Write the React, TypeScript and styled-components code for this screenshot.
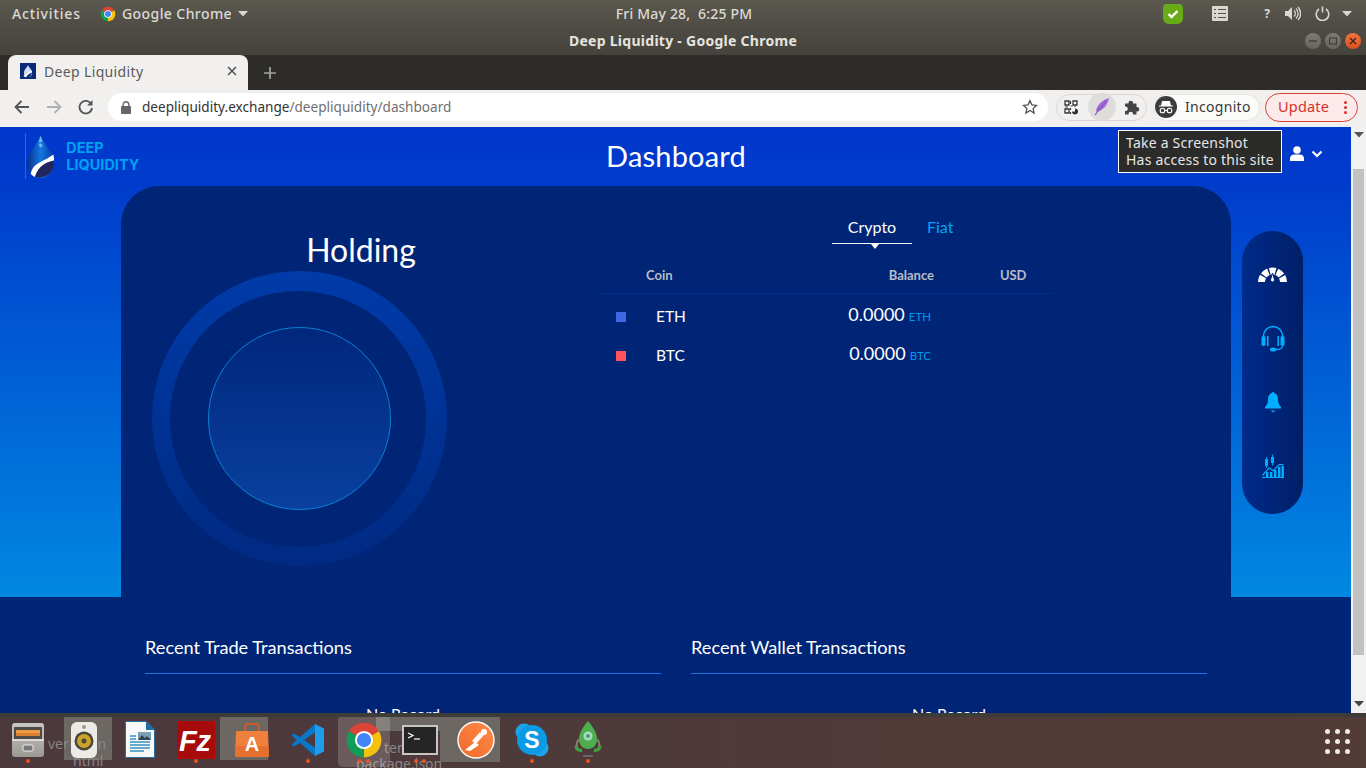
import React from "react";
import styled, { createGlobalStyle } from "styled-components";

const UI = `"Noto Sans", "Open Sans", sans-serif`;
const PAGE = `Lato, "Open Sans", sans-serif`;

const Global = createGlobalStyle`
  html, body { margin: 0; padding: 0; overflow: hidden; background: #2d2c2a; }
  * { box-sizing: border-box; }
`;

const Desktop = styled.div`
  position: relative; width: 1366px; height: 768px; overflow: hidden;
  display: flex; flex-direction: column; font-family: ${UI};
`;
const TopBar = styled.div`
  height: 27px; flex: none; background: linear-gradient(#5b5850, #4f4c45);
  display: grid; grid-template-columns: 1fr auto 1fr; align-items: center;
  color: #dcdbd3; font-size: 14px; font-weight: 500; padding: 0 12px;
`;
const TopLeft = styled.div`display: flex; align-items: center;`;
const Activities = styled.span`width: 88px; letter-spacing: 0.85px;`;
const AppName = styled.span`margin-left: 6px; letter-spacing: 0.42px;`;
const Clock = styled.div`letter-spacing: 0.2px; white-space: pre; margin-left: 2px;`;
const TopRight = styled.div`display: flex; align-items: center; justify-content: flex-end;`;
const TitleBar = styled.div`
  height: 28px; flex: none; background: linear-gradient(#4f4c45, #45433d);
  display: flex; align-items: center; justify-content: center; position: relative; padding-bottom: 2px;
  color: #e6e4de; font-size: 14px; font-weight: 700; letter-spacing: 0.27px;
`;
const WinButtons = styled.div`position: absolute; right: 5px; top: 6px; display: flex; gap: 4px;`;
const WinButton = styled.div<{ $close?: boolean }>`
  width: 16px; height: 16px; border-radius: 50%;
  background: ${p => p.$close ? "linear-gradient(#ef7540,#d9501e)" : "linear-gradient(#7d7a72,#67645d)"};
  display: flex; align-items: center; justify-content: center;
`;
const TabStrip = styled.div`
  height: 35px; flex: none; background: #2d2c2a; padding-left: 8px; display: flex; align-items: center;
`;
const Tab = styled.div`
  width: 240px; height: 35px; background: #f1f0ee; border-radius: 8px 8px 0 0;
  display: flex; align-items: center; padding: 0 11px 3px 12px; color: #5a5a5a; font-size: 14px; letter-spacing: 0.35px;
`;
const TabTitle = styled.span`margin-left: 8px; flex: 1;`;
const NewTab = styled.div`margin-left: 15px; display: flex;`;
const Toolbar = styled.div`
  height: 37px; flex: none; background: #f1f0ee; display: flex; align-items: center; padding: 0 8px 3px 14px;
`;
const NavIcons = styled.div`display: flex; gap: 16px; align-items: center; width: 94px;`;
const Omnibox = styled.div`
  width: 940px; height: 28px; background: #fff; border-radius: 14px; display: flex; align-items: center;
  padding: 0 10px 0 12px; font-size: 13.6px; color: #6f6f6f;
`;
const UrlHost = styled.span`color: #333; margin-left: 10px; margin-top: -2px;`;
const UrlPath = styled.span`flex: 1; margin-top: -2px;`;
const ExtPill = styled.div`
  margin-left: 8px; width: 91px; height: 27px; border: 1px solid #d9d8d6; border-radius: 14px;
  display: flex; align-items: center; justify-content: space-between; padding: 0;
`;
const ExtSlot = styled.div<{ $on?: boolean }>`
  width: 28px; height: 28px; border-radius: 50%; flex: none;
  background: ${p => p.$on ? "#dedddb" : "transparent"};
  display: flex; align-items: center; justify-content: center;
`;
const IncognitoPill = styled.div`
  margin-left: 6px; width: 107px; height: 27px; border-radius: 14px; background: #fbfbfa; border: 1px solid #e6e5e3;
  display: flex; align-items: center; padding-left: 1px; color: #3a3a3a; font-size: 14px; letter-spacing: 0.3px;
`;
const IncognitoLabel = styled.span`margin: -2px 0 0 8px;`;
const UpdatePill = styled.div`
  margin-left: 5px; width: 93px; height: 29px; border-radius: 15px; background: #fcebea; border: 1px solid #d9403a;
  display: flex; align-items: center; justify-content: space-between; padding: 0 10px 0 12px;
  color: #d9302a; font-size: 14.5px; letter-spacing: 0.2px;
`;
const UpdateLabel = styled.span`margin-top: -2px;`;
const Dots = styled.div`display: flex; flex-direction: column; gap: 2px;`;
const Dot = styled.i`display: block; width: 3px; height: 3px; border-radius: 50%; background: #d9302a;`;

const Viewport = styled.div`flex: 1; min-height: 0; display: flex; overflow: hidden;`;
const Page = styled.div`width: 1351px; flex: none; overflow: hidden; font-family: ${PAGE}; background: #002576;`;
const Scrollbar = styled.div`
  flex: 1; background: #f1f1f1; display: flex; flex-direction: column; align-items: center; padding-top: 5px;
`;
const ScrollThumb = styled.div`width: 11px; height: 486px; background: #c1c1c1; margin: 31px 0 46px;`;
const Hero = styled.div`
  height: 470px; background: linear-gradient(#0037cc 0%, #003ccb 12%, #0088e2 100%);
  display: flex; flex-direction: column;
`;
const Header = styled.header`
  height: 59px; flex: none; display: grid; grid-template-columns: 1fr auto 1fr; align-items: center; padding: 0 24px 0 25px;
`;
const Logo = styled.div`
  display: flex; align-items: center; height: 46px; border-left: 1px solid #0a78e0; margin-top: -1px;
`;
const LogoText = styled.div`
  margin-left: 11px; color: #00a2f2; font-family: Inter, ${PAGE}; font-weight: 700; font-size: 14.4px; line-height: 17px;
  letter-spacing: 0.05px; margin-top: -1px;
`;
const PageTitle = styled.h1`margin: -2px 0 0; color: #fff; font-size: 29px; font-weight: 400; line-height: 36px; letter-spacing: 0.2px;`;
const UserMenu = styled.div`display: flex; justify-content: flex-end; align-items: center; gap: 7px; margin: -6px 4px 0 0;`;
const HeroBody = styled.div`flex: 1; min-height: 0; display: flex; padding-left: 121px;`;
const Panel = styled.section`
  width: 1110px; background: #002576; border-radius: 38px 38px 0 0; display: flex;
`;
const HoldingCol = styled.div`width: 480px; flex: none;`;
const HoldingTitle = styled.h2`
  margin: 44px 0 0; text-align: center; color: #fff; font-size: 32px; font-weight: 400; line-height: 40px;
`;
const OuterRing = styled.div`
  width: 295px; height: 295px; margin: 1px 0 0 31px; border-radius: 50%;
  background: linear-gradient(#003ba9, #002a82); display: flex; align-items: center; justify-content: center;
`;
const RingHole = styled.div`
  width: 256px; height: 256px; margin-right: 4px; border-radius: 50%; background: #002576;
  display: flex; align-items: center; justify-content: center;
`;
const InnerDisc = styled.div`
  width: 183px; height: 183px; margin-left: 4px; flex: none; border-radius: 50%; border: 1px solid #0a80d4;
  background: linear-gradient(#00277c, #0a409f);
`;
const TableCol = styled.div`width: 451px; flex: none;`;
const Tabs = styled.div`display: flex; margin: 27px 0 0 231px;`;
const TabLink = styled.div<{ $active?: boolean }>`
  position: relative; height: 31px; line-height: 27px; font-size: 16px; padding: 0 15px;
  color: ${p => p.$active ? "#fff" : "#00a6f5"};
  width: ${p => p.$active ? "80px" : "auto"}; text-align: center;
  border-bottom: ${p => p.$active ? "1px solid #fff" : "0"};
  ${p => p.$active ? `&::after { content: ""; position: absolute; left: 39px; top: 31px; border: 4px solid transparent; border-top: 5px solid #fff; border-bottom: 0; }` : ""}
`;
const TableHead = styled.div`
  margin-top: 17px; height: 33px; display: grid; grid-template-columns: 255px 78px 66px 1fr; align-items: center;
  border-bottom: 1px solid #00318f; color: #b7bcc8; font-size: 13px; font-weight: 700; padding-bottom: 5px;
`;
const CoinHead = styled.span`padding-left: 45px;`;
const BalanceHead = styled.span`text-align: right;`;
const UsdHead = styled.span`grid-column: 4; letter-spacing: -0.2px;`;
const CoinRow = styled.div<{ $first?: boolean }>`
  height: 39px; margin-top: ${p => p.$first ? "2px" : "0"}; display: flex; align-items: center; padding-left: 15px; width: 330px; color: #fff;
`;
const Swatch = styled.i<{ $c: string }>`display: block; width: 10px; height: 10px; margin-top: 2px; background: ${p => p.$c};`;
const CoinName = styled.span`margin-left: 30px; font-size: 15.5px; flex: 1;`;
const Amount = styled.span`font-size: 18px; margin-top: -3px;`;
const Unit = styled.span`font-size: 11.5px; color: #0098ea; margin: 2px 0 0 4px;`;
const SideNav = styled.nav`
  width: 61px; height: 283px; margin: 45px 0 0 11px; border-radius: 31px;
  background: linear-gradient(90deg, #002b8a, #001f66);
  display: flex; flex-direction: column; align-items: center; padding-top: 12px;
`;
const NavItem = styled.div`height: 63.7px; display: flex; justify-content: center; align-items: center;`;
const Lower = styled.div`display: flex; gap: 30px; padding: 37px 0 0 145px;`;
const LowerCol = styled.section`width: 516px;`;
const LowerTitle = styled.h3`
  margin: 0; height: 40px; line-height: 26px; border-bottom: 1px solid #1a70dc; color: #fff; font-size: 18.2px; font-weight: 400;
`;
const NoRecord = styled.div`margin-top: 30px; text-align: center; color: #fff; font-size: 16px; line-height: 20px;`;

const Tooltip = styled.div`
  position: absolute; left: 1118px; top: 130px; width: 164px; height: 43px; background: #2b2b2a; border: 1px solid #fff;
  color: #e6e6e6; font-size: 14px; line-height: 17px; padding: 3px 0 0 7px; letter-spacing: 0.22px; white-space: nowrap;
`;

const Dock = styled.div`
  position: relative; height: 55px; flex: none; background: linear-gradient(90deg, #4b393d, #533b36);
  border-top: 4px solid #3e3c38; overflow: hidden;
`;
const GhostTile = styled.div<{ $x: number; $w: number; $h: number; $t?: number }>`
  position: absolute; left: ${p => p.$x}px; top: ${p => p.$t ?? 0}px; width: ${p => p.$w}px; height: ${p => p.$h}px; background: #6c6763;
`;
const GhostText = styled.span<{ $x: number; $y: number }>`
  position: absolute; left: ${p => p.$x}px; top: ${p => p.$y}px; color: #8b8584; font-size: 14px; line-height: 16px; white-space: nowrap;
`;
const ActiveTile = styled.div`
  position: absolute; left: 338px; top: -2px; width: 52px; height: 52px; border-radius: 5px; background: rgba(255,255,255,0.17);
`;
const DockIcons = styled.div`position: relative; display: flex; height: 100%;`;
const DockItem = styled.div`
  position: relative; width: 56px; height: 47px; display: flex; align-items: center; justify-content: center; padding-bottom: 2px;
`;
const RunDots = styled.div`position: absolute; bottom: 1px; left: 0; right: 0; display: flex; justify-content: center; gap: 4px;`;
const RunDot = styled.i`display: block; width: 4px; height: 4px; border-radius: 50%; background: #e9541f;`;
const AppGrid = styled.div`
  position: absolute; right: 16px; top: 12px; display: grid; grid-template-columns: repeat(3, 5px); gap: 5px;
`;
const GridDot = styled.i`display: block; width: 5px; height: 5px; border-radius: 50%; background: #efecea;`;

const ChromeLogo = ({ s }: { s: number }) => (
  <svg width={s} height={s} viewBox="0 0 48 48">
    <path d="M24 24 L5 13 A22 22 0 0 1 43 13 Z" fill="#db4437" />
    <path d="M24 24 L43 13 A22 22 0 0 1 24 46 Z" fill="#f4c20d" />
    <path d="M24 24 L24 46 A22 22 0 0 1 5 13 Z" fill="#0f9d58" />
    <circle cx="24" cy="24" r="11.500" fill="#fff" />
    <circle cx="24" cy="24" r="9" fill="#4285f4" />
  </svg>
);
const Caret = ({ c = "#d8d7cf" }: { c?: string }) => (
  <svg width="10" height="6" viewBox="0 0 10 6"><path d="M0 0h10L5 5.500z" fill={c} /></svg>
);

const Drop = ({ s }: { s: number }) => (
  <svg width={s * 0.68} height={s} viewBox="0 0 30 44">
    <defs>
      <linearGradient id="dg" x1="0" x2="1" y1="0" y2="0">
        <stop offset="0" stopColor="#0a2f8c" /><stop offset="0.5" stopColor="#1278e0" /><stop offset="1" stopColor="#0a3aa0" />
      </linearGradient>
    </defs>
    <path d="M15 0 C18 10 29 18 29 30 A14 14 0 0 1 1 30 C1 18 12 10 15 0Z" fill="url(#dg)" />
    <path d="M15 1l2 6h-4zM14 8l3 2-1 3-3-2z" fill="#6fb8f5" />
    <path d="M27.500 22 C29 30 29 38 20 42 A14 14 0 0 1 5 40 C8 30 14 30 27.500 22Z" fill="#22265c" />
    <path d="M28 20 C29 24 29 25 28.600 26 C20 28 13 31 9 43 A14 14 0 0 1 5 40 C7 28 18 28 28 20Z" fill="#fff" />
  </svg>
);

export default function App() {
  return (
    <Desktop>
      <Global />
      <TopBar>
        <TopLeft>
          <Activities>Activities</Activities>
          <ChromeLogo s={16} />
          <AppName>Google Chrome</AppName>
          <span style={{ width: 6 }} />
          <Caret />
        </TopLeft>
        <Clock>Fri May 28,  6:25 PM</Clock>
        <TopRight>
          <svg width="22" height="22" viewBox="0 0 22 22" style={{ marginRight: 28 }}>
            <path d="M4 1h13c3 0 4 2 4 5v9c0 4-3 6-7 6H8c-4 0-7-2-7-6V5c0-2 1-4 3-4z" fill="#69ab16" />
            <path d="M6.500 11l3 3 6-6" fill="none" stroke="#fff" strokeWidth="2.400" />
          </svg>
          <svg width="16" height="15" viewBox="0 0 16 15" style={{ marginRight: 36 }}>
            <rect width="16" height="15" rx="1" fill="#d9d8d0" />
            <path d="M2 3.500h2M6 3.500h8M2 7.500h2M6 7.500h8M2 11.500h2M6 11.500h8" stroke="#55524b" strokeWidth="1" />
          </svg>
          <span style={{ fontSize: 12, fontWeight: 700, marginRight: 15 }}>?</span>
          <svg width="16" height="15" viewBox="0 0 16 15" style={{ marginRight: 14 }}>
            <path d="M0 5h3l4-4v13l-4-4H0z" fill="#d9d8d0" />
            <path d="M9 4.500a4 4 0 0 1 0 6M11 2.500a7 7 0 0 1 0 10M13 1a9.500 9.500 0 0 1 0 13" fill="none" stroke="#d9d8d0" strokeWidth="1.300" />
          </svg>
          <svg width="15" height="15" viewBox="0 0 15 15" style={{ marginRight: 12 }}>
            <path d="M4 3a6.300 6.300 0 1 0 7 0" fill="none" stroke="#d9d8d0" strokeWidth="1.600" />
            <path d="M7.500 0.500v6" stroke="#d9d8d0" strokeWidth="1.600" />
          </svg>
          <Caret />
          <span style={{ width: 2 }} />
        </TopRight>
      </TopBar>
      <TitleBar>
        Deep Liquidity - Google Chrome
        <WinButtons>
          <WinButton><svg width="10" height="10"><path d="M1 5h8" stroke="#3c3a36" strokeWidth="1.300" /></svg></WinButton>
          <WinButton><svg width="10" height="10"><rect x="1.500" y="2" width="7" height="6" fill="none" stroke="#3c3a36" /></svg></WinButton>
          <WinButton $close><svg width="10" height="10"><path d="M2 2l6 6M8 2l-6 6" stroke="#4a2010" strokeWidth="1.300" /></svg></WinButton>
        </WinButtons>
      </TitleBar>
      <TabStrip>
        <Tab>
          <svg width="16" height="16" viewBox="0 0 16 16">
            <rect width="16" height="16" fill="#0b2a78" />
            <path d="M8 2c1 3 4 4 4 8a4 4 0 0 1-8 0c0-4 3-5 4-8z" fill="#cfe0f6" />
            <path d="M4 12c2-3 5-2 8-4 0 4-2 6-4 6-2 0-3-1-4-2z" fill="#0b2a78" />
            <path d="M3.500 13c2-4 5-3 8.500-5.500v2C9 11 7 11.500 6 14.500z" fill="#fff" />
          </svg>
          <TabTitle>Deep Liquidity</TabTitle>
          <svg width="10" height="10" viewBox="0 0 10 10"><path d="M1 1l8 8M9 1l-8 8" stroke="#555" strokeWidth="1.600" /></svg>
        </Tab>
        <NewTab>
          <svg width="14" height="14" viewBox="0 0 14 14"><path d="M7 1v12M1 7h12" stroke="#a3a3a1" strokeWidth="1.700" /></svg>
        </NewTab>
      </TabStrip>
      <Toolbar>
        <NavIcons>
          <svg width="16" height="14" viewBox="0 0 16 14"><path d="M15 7H2M7.500 1L1.500 7l6 6" fill="none" stroke="#555" strokeWidth="1.800" /></svg>
          <svg width="16" height="14" viewBox="0 0 16 14"><path d="M1 7h13M8.500 1l6 6-6 6" fill="none" stroke="#b0b0b0" strokeWidth="1.800" /></svg>
          <svg width="16" height="16" viewBox="0 0 16 16"><path d="M13.500 5.500A6.300 6.300 0 1 0 14 9" fill="none" stroke="#555" strokeWidth="1.800" /><path d="M14.500 1v5.500H9z" fill="#555" /></svg>
        </NavIcons>
        <Omnibox>
          <svg width="12" height="13" viewBox="0 0 12 13">
            <rect x="1" y="5" width="10" height="8" rx="1" fill="#666" />
            <path d="M3.200 5V3.500a2.800 2.800 0 0 1 5.600 0V5" fill="none" stroke="#666" strokeWidth="1.400" />
          </svg>
          <UrlHost>deepliquidity.exchange</UrlHost>
          <UrlPath>/deepliquidity/dashboard</UrlPath>
          <svg width="16" height="16" viewBox="0 0 24 24"><path d="M12 2.500l2.900 6.300 6.900.8-5.100 4.700 1.400 6.800L12 17.200l-6.100 3.900 1.400-6.800L2.200 9.600l6.900-.8z" fill="none" stroke="#555" strokeWidth="2" /></svg>
        </Omnibox>
        <ExtPill>
          <ExtSlot>
            <svg width="14" height="15" viewBox="0 0 14 15">
              <rect width="14" height="15" fill="#fafafa" />
              <path d="M1 1h4v4H1zM9 1h4v4H9zM1 9h4v4H1z" fill="none" stroke="#333" strokeWidth="1.300" />
              <path d="M6.500 1v3M6.500 6h2M1 7h3M6.500 8v2M6.500 12v2M11 6v1" stroke="#333" strokeWidth="1.200" />
              <path d="M11 8.500A3 3 0 1 1 8 11.500h3z" fill="#333" />
            </svg>
          </ExtSlot>
          <ExtSlot $on>
            <svg width="16" height="18" viewBox="0 0 16 18">
              <path d="M15 0C8 2 3 7 2 13l1 1c6-2 11-7 12-14z" fill="#a06cd5" />
              <path d="M12 3L1 17" stroke="#8a4fc7" strokeWidth="1.200" />
            </svg>
          </ExtSlot>
          <ExtSlot>
            <svg width="16" height="16" viewBox="0 0 16 16">
              <path d="M1 4.500h3.500a2.300 2.300 0 1 1 4.500 0H12.500V8a2.300 2.300 0 1 1 0 4.500V15.500H9a2.300 2.300 0 1 0-4.500 0H1V12a2.300 2.300 0 1 0 0-4.500z" fill="#444" />
            </svg>
          </ExtSlot>
        </ExtPill>
        <IncognitoPill>
          <svg width="22" height="22" viewBox="0 0 22 22">
            <circle cx="11" cy="11" r="11" fill="#3c3c3c" />
            <path d="M4 10h14M6.500 10l1-4.500h7l1 4.500" fill="#fff" stroke="#fff" strokeWidth="1.100" />
            <circle cx="7.500" cy="14.500" r="2.300" fill="none" stroke="#fff" strokeWidth="1.100" />
            <circle cx="14.500" cy="14.500" r="2.300" fill="none" stroke="#fff" strokeWidth="1.100" />
            <path d="M9.800 14.500h2.400" stroke="#fff" strokeWidth="1" />
          </svg>
          <IncognitoLabel>Incognito</IncognitoLabel>
        </IncognitoPill>
        <UpdatePill>
          <UpdateLabel>Update</UpdateLabel>
          <Dots><Dot /><Dot /><Dot /></Dots>
        </UpdatePill>
      </Toolbar>
      <Viewport>
        <Page>
          <Hero>
            <Header>
              <Logo>
                <Drop s={43} />
                <LogoText>DEEP<br />LIQUIDITY</LogoText>
              </Logo>
              <PageTitle>Dashboard</PageTitle>
              <UserMenu>
                <svg width="14" height="15" viewBox="0 0 14 15">
                  <circle cx="7" cy="4" r="3.800" fill="#fff" />
                  <path d="M0 15v-2.500C0 10 2 8.500 4 8.500h6c2 0 4 1.500 4 4V15z" fill="#fff" />
                </svg>
                <svg width="12" height="8" viewBox="0 0 12 8"><path d="M1.500 1.500L6 6l4.500-4.500" fill="none" stroke="#fff" strokeWidth="2.200" /></svg>
              </UserMenu>
            </Header>
            <HeroBody>
              <Panel>
                <HoldingCol>
                  <HoldingTitle>Holding</HoldingTitle>
                  <OuterRing>
                    <RingHole>
                      <InnerDisc />
                    </RingHole>
                  </OuterRing>
                </HoldingCol>
                <TableCol>
                  <Tabs>
                    <TabLink $active>Crypto</TabLink>
                    <TabLink>Fiat</TabLink>
                  </Tabs>
                  <TableHead>
                    <CoinHead>Coin</CoinHead>
                    <BalanceHead>Balance</BalanceHead>
                    <UsdHead>USD</UsdHead>
                  </TableHead>
                  <CoinRow $first>
                    <Swatch $c="#3e68e6" />
                    <CoinName>ETH</CoinName>
                    <Amount>0.0000</Amount>
                    <Unit>ETH</Unit>
                  </CoinRow>
                  <CoinRow>
                    <Swatch $c="#ff525a" />
                    <CoinName>BTC</CoinName>
                    <Amount>0.0000</Amount>
                    <Unit>BTC</Unit>
                  </CoinRow>
                </TableCol>
              </Panel>
              <SideNav>
                <NavItem>
                  <svg width="29" height="16" viewBox="0 0 29 16">
                    <path d="M3.500 15A11 11 0 0 1 25.500 15" fill="none" stroke="#fff" strokeWidth="7" strokeDasharray="5.800 1.400" />
                    <path d="M14.500 6l2 7a2 2 0 0 1-4 0z" fill="#fff" stroke="#00267a" strokeWidth="1" />
                  </svg>
                </NavItem>
                <NavItem>
                  <svg width="24" height="27" viewBox="0 0 24 27">
                    <path d="M2.500 14V11a9.500 9.500 0 0 1 19 0v3" fill="none" stroke="#00aeff" strokeWidth="1.500" />
                    <rect x="0.500" y="11" width="4" height="10" rx="1.800" fill="#00aeff" />
                    <rect x="19.500" y="11" width="4" height="10" rx="1.800" fill="#00aeff" />
                    <rect x="6" y="11" width="1.500" height="10" fill="#00aeff" />
                    <rect x="16.500" y="11" width="1.500" height="10" fill="#00aeff" />
                    <path d="M21.500 21c0 2.500-3 3.500-7 3.500" fill="none" stroke="#00aeff" strokeWidth="1.300" />
                    <ellipse cx="12" cy="24.500" rx="3" ry="2" fill="#00aeff" />
                  </svg>
                </NavItem>
                <NavItem>
                  <svg width="16" height="21" viewBox="0 0 16 21">
                    <circle cx="8" cy="1.500" r="1.500" fill="#00aeff" />
                    <path d="M8 1c3.500 0 5 3 5 6 0 4 1 6 3 8v1.500H0V15c2-2 3-4 3-8 0-3 1.500-6 5-6z" fill="#00aeff" />
                    <path d="M5.500 18.500h5L8 20.500z" fill="#00aeff" />
                  </svg>
                </NavItem>
                <NavItem>
                  <svg width="22" height="24" viewBox="0 0 22 24" fill="#00aeff">
                    <rect x="3" y="5" width="3" height="7" /><rect x="4.100" y="3" width="0.900" height="11" />
                    <rect x="9" y="3" width="3" height="6" /><rect x="10.100" y="0.500" width="0.900" height="11" />
                    <path d="M0 21L7 13l4 3 6-6h4.500v1.200H17.500l-6.400 6.400-4-3L1 22z" />
                    <rect x="4" y="18" width="2.400" height="5.500" /><rect x="8" y="18" width="2.400" height="5.500" />
                    <rect x="12" y="16" width="2.400" height="7.500" /><rect x="16" y="13" width="2.400" height="10.500" />
                    <rect x="19.500" y="12" width="2.400" height="11.500" />
                    <rect x="0" y="23" width="22" height="1" />
                  </svg>
                </NavItem>
              </SideNav>
            </HeroBody>
          </Hero>
          <Lower>
            <LowerCol>
              <LowerTitle>Recent Trade Transactions</LowerTitle>
              <NoRecord>No Record</NoRecord>
            </LowerCol>
            <LowerCol>
              <LowerTitle>Recent Wallet Transactions</LowerTitle>
              <NoRecord>No Record</NoRecord>
            </LowerCol>
          </Lower>
        </Page>
        <Scrollbar>
          <Caret c="#555" />
          <ScrollThumb />
          <Caret c="#444" />
        </Scrollbar>
      </Viewport>
      <Tooltip>Take a Screenshot<br />Has access to this site</Tooltip>
      <Dock>
        <GhostTile $x={64} $w={48} $h={43} />
        <GhostTile $x={220} $w={48} $h={43} />
        <GhostTile $x={376} $w={76} $h={14} />
        <GhostTile $x={440} $w={60} $h={45} />
        <GhostText $x={48} $y={19}>ver  ation</GhostText>
        <GhostText $x={73} $y={36}>html</GhostText>
        <GhostText $x={384} $y={23}>ter</GhostText>
        <GhostText $x={356} $y={39}>package.json</GhostText>
        <ActiveTile />
        <DockIcons>
          <DockItem>
            <svg width="34" height="36" viewBox="0 0 34 36">
              <defs><linearGradient id="cab" x1="0" x2="0" y1="0" y2="1"><stop offset="0" stopColor="#c9c7c2" /><stop offset="1" stopColor="#9a9893" /></linearGradient></defs>
              <rect x="1" y="1" width="32" height="34" rx="3" fill="url(#cab)" />
              <rect x="3" y="5" width="28" height="12" fill="#4e4a46" />
              <rect x="5" y="8" width="24" height="3" fill="#ee9a45" />
              <rect x="5" y="11" width="24" height="3" fill="#d97f2e" />
              <rect x="1" y="17" width="32" height="2" fill="#dcdad6" />
              <rect x="12" y="23" width="10" height="6" rx="1" fill="#777" stroke="#eee" />
            </svg>
            <RunDots><RunDot /></RunDots>
          </DockItem>
          <DockItem>
            <svg width="32" height="38" viewBox="0 0 32 38">
              <rect x="3" y="1" width="26" height="36" rx="6" fill="#eceae4" />
              <circle cx="16" cy="20" r="9.500" fill="#4a463a" />
              <circle cx="16" cy="20" r="7" fill="#c8a42a" />
              <circle cx="16" cy="20" r="2.500" fill="#4a463a" />
              <circle cx="16" cy="6" r="2" fill="#999" />
            </svg>
          </DockItem>
          <DockItem>
            <svg width="30" height="37" viewBox="0 0 30 37">
              <path d="M0.500 0.500H21L29.500 9V36.500H0.500z" fill="#f6f8fa" stroke="#2a6d9e" />
              <path d="M21 0.500L29.500 9H21z" fill="#1a6ea8" />
              <rect x="13" y="11" width="13" height="8" fill="#7aa0b8" />
              <path d="M13 19l4-5 3 3 2-2 4 4z" fill="#345" />
              <path d="M5 15h6M5 18h6M5 21h20M5 24h20M5 27h20M5 30h14" stroke="#3a8ec0" strokeWidth="1.500" />
            </svg>
          </DockItem>
          <DockItem>
            <svg width="38" height="38" viewBox="0 0 38 38">
              <rect width="38" height="38" fill="#a80b0b" />
              <text x="18" y="30" textAnchor="middle" fontFamily="Liberation Sans, sans-serif" fontWeight="700" fontStyle="italic" fontSize="29" fill="#fff">Fz</text>
            </svg>
            <RunDots><RunDot /></RunDots>
          </DockItem>
          <DockItem>
            <svg width="36" height="36" viewBox="0 0 36 36">
              <path d="M11 9V5a3 3 0 0 1 3-3h8a3 3 0 0 1 3 3v4" fill="none" stroke="#c95d26" strokeWidth="2" />
              <path d="M2 9h32l1 26H1z" fill="#ef7f3d" />
              <path d="M1.500 24h33l.5 11H1z" fill="#e5702f" />
              <text x="18" y="29" textAnchor="middle" fontFamily="Liberation Sans, sans-serif" fontWeight="700" fontSize="20" fill="#fff">A</text>
            </svg>
          </DockItem>
          <DockItem>
            <svg width="34" height="34" viewBox="0 0 34 34">
              <path d="M24 1L0.500 21.500l3 2L24 9.500z" fill="#0a78c8" />
              <path d="M0.500 12.500l3-2L24 24.500V33z" fill="#0a78c8" />
              <path d="M24 1L33 5.500V28.500L24 33z" fill="#1f9cf0" />
            </svg>
            <RunDots><RunDot /></RunDots>
          </DockItem>
          <DockItem>
            <ChromeLogo s={38} />
            <RunDots><RunDot /><RunDot /></RunDots>
          </DockItem>
          <DockItem>
            <svg width="36" height="30" viewBox="0 0 36 30">
              <rect width="36" height="30" fill="#c8c6c2" />
              <rect x="2" y="2" width="32" height="26" fill="#252525" />
              <path d="M6 8l5 2.500-5 2.500" fill="none" stroke="#fff" strokeWidth="1.200" />
              <path d="M12 14h6" stroke="#fff" strokeWidth="1.200" />
            </svg>
            <RunDots><RunDot /><RunDot /></RunDots>
          </DockItem>
          <DockItem>
            <svg width="38" height="38" viewBox="0 0 38 38">
              <defs>
                <linearGradient id="pm" x1="0" y1="1" x2="1" y2="0"><stop offset="0" stopColor="#f06a28" /><stop offset="1" stopColor="#ff8a4a" /></linearGradient>
              </defs>
              <circle cx="19" cy="19" r="18" fill="url(#pm)" stroke="#fff" strokeWidth="1.400" />
              <path d="M8 29l10-8 4 3-9 6z" fill="#fff" />
              <path d="M15 20l8-9 4 3-8 9z" fill="#fff" opacity="0.950" />
              <circle cx="27" cy="11" r="3" fill="#fff" />
            </svg>
          </DockItem>
          <DockItem>
            <svg width="34" height="34" viewBox="0 0 34 34">
              <circle cx="9" cy="9" r="8.500" fill="#1fa3e8" />
              <circle cx="25" cy="25" r="8.500" fill="#1fa3e8" />
              <circle cx="17" cy="17" r="15" fill="#0a9ae6" />
              <text x="17" y="25" textAnchor="middle" fontFamily="Liberation Sans, sans-serif" fontWeight="700" fontSize="23" fill="#fff">S</text>
            </svg>
            <RunDots><RunDot /></RunDots>
          </DockItem>
          <DockItem>
            <svg width="28" height="38" viewBox="0 0 28 38">
              <path d="M5 18c-4 5-3 11 3 12M23 18c4 5 3 11-3 12" fill="none" stroke="#8a8060" strokeWidth="2" />
              <path d="M14 0c5 6 9 12 9 18 0 6-4 10-9 10s-9-4-9-10C5 12 9 6 14 0z" fill="#4cae4f" />
              <circle cx="14" cy="15" r="4.500" fill="#a8dcc0" />
              <circle cx="14" cy="15" r="2" fill="#4a9a70" />
              <path d="M2 25c0 3 2 5 6 4M26 25c0 3-2 5-6 4" fill="none" stroke="#3ea044" strokeWidth="3" />
              <path d="M9 35h10" stroke="#888" strokeWidth="1" />
            </svg>
            <RunDots><RunDot /></RunDots>
          </DockItem>
        </DockIcons>
        <AppGrid>
          {Array.from({ length: 9 }, (_, i) => <GridDot key={i} />)}
        </AppGrid>
      </Dock>
    </Desktop>
  );
}
